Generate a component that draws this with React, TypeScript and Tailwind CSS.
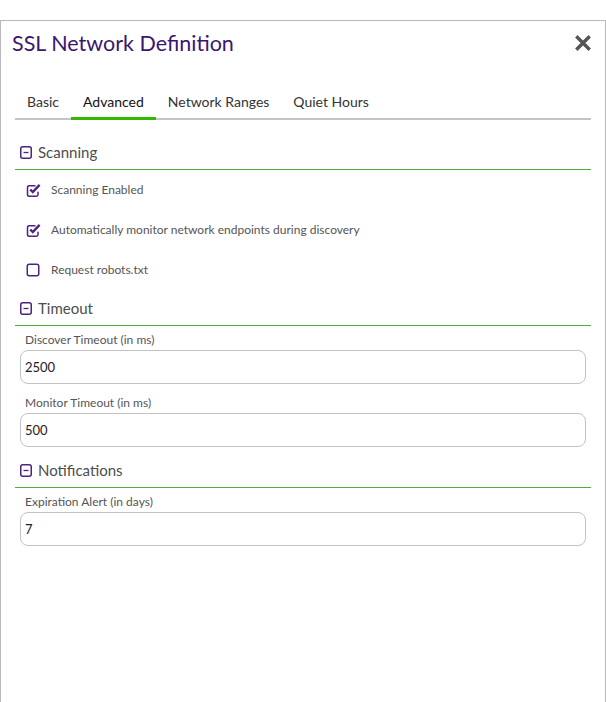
import { useState } from 'react';

const font = { fontFamily: 'Lato, "Noto Sans", sans-serif' };

function MinusSquare() {
  return (
    <svg width="12" height="13" viewBox="0 0 12 13" className="shrink-0">
      <rect x="0.75" y="0.75" width="10.5" height="11.5" rx="2" fill="none" stroke="#4a2480" strokeWidth="1.5" />
      <path d="M3.5 6.5h5" stroke="#4a2480" strokeWidth="1.3" />
    </svg>
  );
}

function CheckBox({ checked }: { checked: boolean }) {
  if (!checked) {
    return (
      <svg width="14" height="14" viewBox="0 0 14 14" className="shrink-0">
        <rect x="1.25" y="1.25" width="11.5" height="11.5" rx="2" fill="none" stroke="#4a2480" strokeWidth="1.5" />
      </svg>
    );
  }
  return (
    <svg width="15" height="15" viewBox="0 0 15 15" className="shrink-0">
      <path
        d="M9.5 2.75H3.25a1.75 1.75 0 0 0-1.75 1.75v7a1.75 1.75 0 0 0 1.75 1.75h7a1.75 1.75 0 0 0 1.75-1.75V8.75"
        fill="none"
        stroke="#4a2480"
        strokeWidth="1.5"
      />
      <path d="M4.2 6.5l2.6 2.6 6.8-7.2" fill="none" stroke="#4a2480" strokeWidth="2.4" />
    </svg>
  );
}

function SectionHeader({ title, className = '' }: { title: string; className?: string }) {
  return (
    <div className={`flex items-center gap-[6px] border-b border-[#4fae35] pb-[7px] pl-[5px] ${className}`}>
      <MinusSquare />
      <span className="text-[15px] leading-5 text-[#4d4d4d]">{title}</span>
    </div>
  );
}

function Field({ label, value, className = '' }: { label: string; value: string; className?: string }) {
  return (
    <div className={`px-[5px] ${className}`}>
      <div className="pl-[5px] text-[12px] leading-[14px] text-[#555]">{label}</div>
      <input
        defaultValue={value}
        className="mt-[3px] block h-[34px] w-full rounded-[8px] border border-[#c2c2c2] bg-white px-[4px] text-[13px] text-[#222] outline-none"
        style={font}
      />
    </div>
  );
}

const tabs = ['Basic', 'Advanced', 'Network Ranges', 'Quiet Hours'];

export default function App() {
  const [active, setActive] = useState('Advanced');

  return (
    <div className="h-[702px] bg-white pt-[20px]" style={font}>
      <div className="h-[682px] w-[606px] border-x border-t border-[#bab7c0] bg-white">
        <div className="flex items-start justify-between pl-[11px] pr-[14px] pt-[10px]">
          <h1 className="text-[21.5px] leading-6 text-[#3b166f]">SSL Network Definition</h1>
          <svg width="16" height="16" viewBox="0 0 16 16" className="mt-[4px]">
            <path d="M2.5 2.5l11 11M13.5 2.5l-11 11" stroke="#555" strokeWidth="3.4" strokeLinecap="square" />
          </svg>
        </div>

        <div className="px-[14px]">
          <div className="mt-[37px] flex border-b-2 border-[#c4c4c4]">
            {tabs.map((t) => (
              <button
                key={t}
                onClick={() => setActive(t)}
                className={`-mb-[2px] px-3 pb-[5px] text-[14px] leading-5 ${
                  t === active ? 'border-b-[3px] border-[#33b800] text-[#111]' : 'border-b-[3px] border-transparent text-[#333]'
                }`}
              >
                {t}
              </button>
            ))}
          </div>

          <SectionHeader title="Scanning" className="mt-[22px]" />
          <div className="pl-[11px]">
            {[
              { label: 'Scanning Enabled', checked: true },
              { label: 'Automatically monitor network endpoints during discovery', checked: true },
              { label: 'Request robots.txt', checked: false },
            ].map((r) => (
              <div key={r.label} className="flex h-10 items-center gap-[10px]">
                <div className="flex w-[15px] justify-start">
                  <CheckBox checked={r.checked} />
                </div>
                <span className="text-[12px] text-[#555]">{r.label}</span>
              </div>
            ))}
          </div>

          <SectionHeader title="Timeout" className="mt-[8px]" />
          <Field label="Discover Timeout (in ms)" value="2500" className="mt-[7px]" />
          <Field label="Monitor Timeout (in ms)" value="500" className="mt-[12px]" />

          <SectionHeader title="Notifications" className="mt-[13px]" />
          <Field label="Expiration Alert (in days)" value="7" className="mt-[7px]" />
        </div>
      </div>
    </div>
  );
}
